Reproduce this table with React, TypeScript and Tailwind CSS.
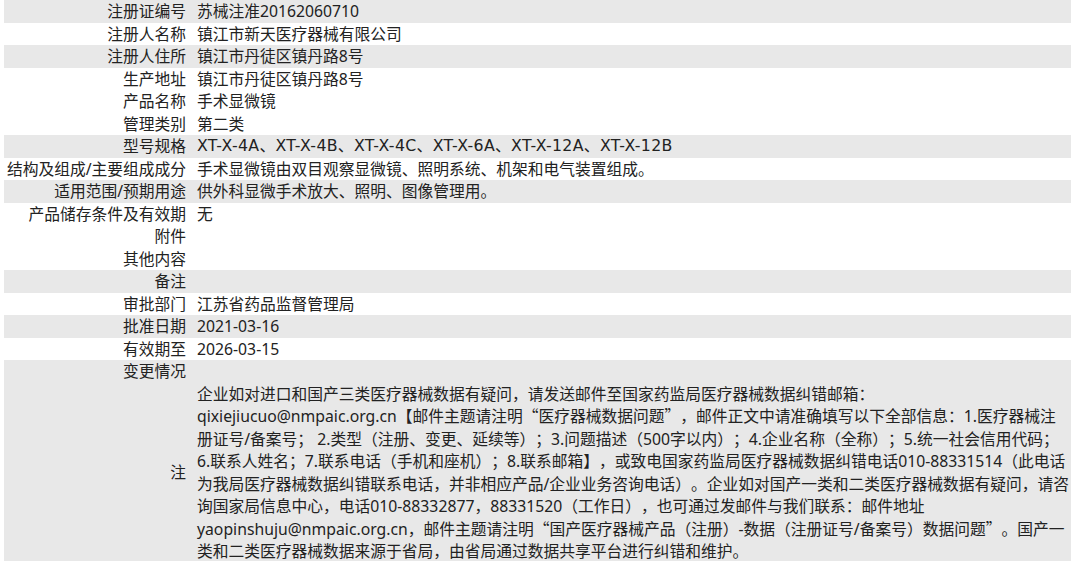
import React from "react";

type Row = { label: string; value: string; shaded?: boolean; wide?: boolean };

const rows: Row[] = [
  { label: "注册证编号", value: "苏械注准20162060710", shaded: true },
  { label: "注册人名称", value: "镇江市新天医疗器械有限公司" },
  { label: "注册人住所", value: "镇江市丹徒区镇丹路8号", shaded: true },
  { label: "生产地址", value: "镇江市丹徒区镇丹路8号" },
  { label: "产品名称", value: "手术显微镜" },
  { label: "管理类别", value: "第二类" },
  { label: "型号规格", value: "XT-X-4A、XT-X-4B、XT-X-4C、XT-X-6A、XT-X-12A、XT-X-12B", shaded: true, wide: true },
  { label: "结构及组成/主要组成成分", value: "手术显微镜由双目观察显微镜、照明系统、机架和电气装置组成。" },
  { label: "适用范围/预期用途", value: "供外科显微手术放大、照明、图像管理用。", shaded: true },
  { label: "产品储存条件及有效期", value: "无" },
  { label: "附件", value: "" },
  { label: "其他内容", value: "" },
  { label: "备注", value: "", shaded: true },
  { label: "审批部门", value: "江苏省药品监督管理局" },
  { label: "批准日期", value: "2021-03-16", shaded: true },
  { label: "有效期至", value: "2026-03-15" },
  { label: "变更情况", value: "", shaded: true },
];

// the notice wraps at these points in the original page
const noteLines = [
  "企业如对进口和国产三类医疗器械数据有疑问，请发送邮件至国家药监局医疗器械数据纠错邮箱：",
  "qixiejiucuo@nmpaic.org.cn【邮件主题请注明“医疗器械数据问题”，邮件正文中请准确填写以下全部信息：1.医疗器械注",
  "册证号/备案号； 2.类型（注册、变更、延续等）；3.问题描述（500字以内）；4.企业名称（全称）；5.统一社会信用代码；",
  "6.联系人姓名；7.联系电话（手机和座机）；8.联系邮箱】，或致电国家药监局医疗器械数据纠错电话010-88331514（此电话",
  "为我局医疗器械数据纠错联系电话，并非相应产品/企业业务咨询电话）。企业如对国产一类和二类医疗器械数据有疑问，请咨",
  "询国家局信息中心，电话010-88332877，88331520（工作日），也可通过发邮件与我们联系：邮件地址",
  "yaopinshuju@nmpaic.org.cn，邮件主题请注明“国产医疗器械产品（注册）-数据（注册证号/备案号）数据问题”。国产一",
  "类和二类医疗器械数据来源于省局，由省局通过数据共享平台进行纠错和维护。",
];

// curly quotes come out full width in the original font
const withQuotes = (text: string) =>
  text.split(/([“”])/).map((part, i) =>
    part === "“" || part === "”" ? (
      <span key={i} style={{ fontFamily: '"Noto Sans CJK SC", sans-serif' }}>
        {part}
      </span>
    ) : (
      part
    )
  );

const App = () => {
  return (
    <div
      className="w-[1071px] h-[561px] overflow-hidden bg-white pl-1 text-[15.75px] leading-[22.5px] text-[#222] [text-spacing-trim:space-all]"
      style={{ fontFamily: '"Noto Sans", "Noto Sans CJK SC", sans-serif' }}
    >
      {rows.map((row) => (
        <div
          key={row.label}
          className={`flex h-[22.5px] ${row.shaded ? "bg-[#e8e8e8]" : "bg-white"}`}
        >
          <div className="w-[186px] shrink-0 pr-1 text-right whitespace-nowrap">
            {row.label}
          </div>
          <div
            className={`pl-[7px] whitespace-nowrap ${row.wide ? "tracking-[0.33px]" : ""}`}
            style={row.wide ? { fontFamily: '"DejaVu Sans", "Noto Sans CJK SC", sans-serif' } : undefined}
          >
            {row.value}
          </div>
        </div>
      ))}
      <div className="flex bg-[#e8e8e8]">
        <div className="w-[186px] shrink-0 pr-1 flex items-center justify-end">
          注
        </div>
        <div className="pl-[7px] flex flex-col">
          {noteLines.map((line, i) => (
            <span key={i} className="whitespace-nowrap">
              {withQuotes(line)}
            </span>
          ))}
        </div>
      </div>
    </div>
  );
};

export default App;
